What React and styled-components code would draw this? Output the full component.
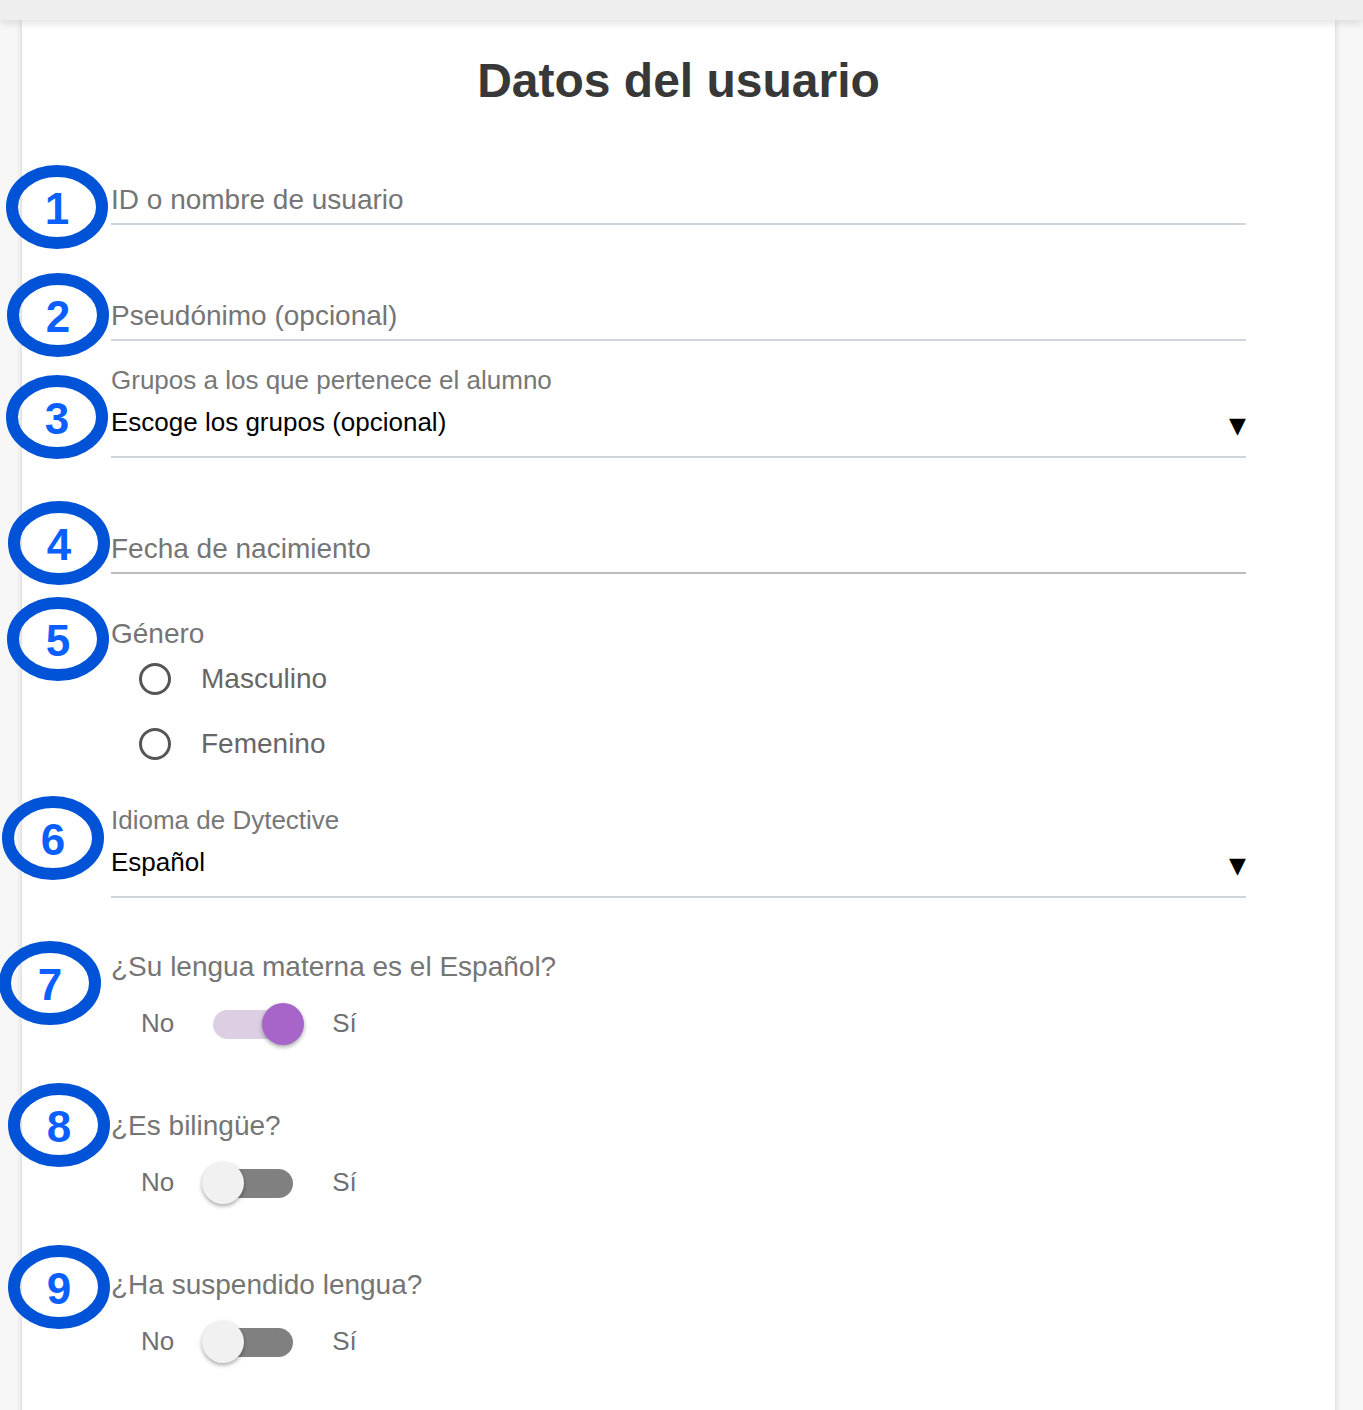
import React from 'react';
import styled, { createGlobalStyle } from 'styled-components';

const GlobalStyle = createGlobalStyle`
  html, body {
    margin: 0;
    padding: 0;
    background: #f7f7f7;
    font-family: "Liberation Sans", Arial, Helvetica, sans-serif;
  }
`;

const fields = [
  { n: 1, kind: 'text', text: 'ID o nombre de usuario', top: 74, mx: -105, my: -18 },
  { n: 2, kind: 'text', text: 'Pseudónimo (opcional)', top: 74, mx: -104, my: -26 },
  {
    n: 3,
    kind: 'select',
    label: 'Grupos a los que pertenece el alumno',
    value: 'Escoge los grupos (opcional)',
    top: 23,
    mx: -105,
    my: 11,
  },
  { n: 4, kind: 'text', text: 'Fecha de nacimiento', top: 74, mx: -103, my: -31, grey: true },
  { n: 5, kind: 'radio', label: 'Género', options: ['Masculino', 'Femenino'], top: 43, mx: -104, my: -20 },
  { n: 6, kind: 'select', label: 'Idioma de Dytective', value: 'Español', top: 43, mx: -109, my: -8 },
  { n: 7, kind: 'switch', label: '¿Su lengua materna es el Español?', on: true, top: 52, mx: -112, my: -9 },
  { n: 8, kind: 'switch', label: '¿Es bilingüe?', on: false, top: 64, mx: -103, my: -26 },
  { n: 9, kind: 'switch', label: '¿Ha suspendido lengua?', on: false, top: 64, mx: -103, my: -23 },
];

const Marker = ({ n, x, y }) => (
  <MarkerWrap $x={x} $y={y}>
    <svg width="102" height="84" viewBox="0 0 102 84">
      <ellipse cx="51" cy="42" rx="45" ry="36" fill="none" stroke="#0052d6" strokeWidth="12" />
    </svg>
    <Digit>{n}</Digit>
  </MarkerWrap>
);

const Chevron = () => <Arrow>▼</Arrow>;

const Switch = ({ on }) => (
  <SwitchRow>
    <SwitchText>No</SwitchText>
    <Track $on={on}>
      <Thumb $on={on} />
    </Track>
    <SwitchText>Sí</SwitchText>
  </SwitchRow>
);

const renderField = (f) => {
  switch (f.kind) {
    case 'text':
      return (
        <TextInput $grey={f.grey}>
          <Placeholder>{f.text}</Placeholder>
        </TextInput>
      );
    case 'select':
      return (
        <SelectBox>
          <SmallLabel>{f.label}</SmallLabel>
          <SelectValue>
            <span>{f.value}</span>
            <Chevron />
          </SelectValue>
        </SelectBox>
      );
    case 'radio':
      return (
        <div>
          <Placeholder>{f.label}</Placeholder>
          <RadioList>
            {f.options.map((o) => (
              <RadioRow key={o}>
                <RadioCircle />
                <RadioText>{o}</RadioText>
              </RadioRow>
            ))}
          </RadioList>
        </div>
      );
    case 'switch':
      return (
        <div>
          <Placeholder>{f.label}</Placeholder>
          <Switch on={f.on} />
        </div>
      );
    default:
      return null;
  }
};

const App = () => {
  return (
    <>
      <GlobalStyle />
      <TopBar />
      <Page>
        <Card>
          <Title>Datos del usuario</Title>
          <Form>
            {fields.map((f) => (
              <Field key={f.n} $top={f.top}>
                <Marker n={f.n} x={f.mx} y={f.my} />
                {renderField(f)}
              </Field>
            ))}
          </Form>
        </Card>
      </Page>
    </>
  );
};

const TopBar = styled.div`
  position: relative;
  z-index: 2;
  height: 20px;
  background: #eeeeee;
  box-shadow: 0 3px 8px rgba(0, 0, 0, 0.12);
`;

const Page = styled.div`
  display: flex;
  padding: 0 28px 0 22px;
  min-height: 1390px;
`;

const Card = styled.div`
  flex: 1;
  background: #ffffff;
  box-shadow: 0 0 6px rgba(0, 0, 0, 0.18);
  padding: 33px 89px 80px;
`;

const Title = styled.h1`
  margin: 0;
  font-size: 48px;
  line-height: 56px;
  font-weight: 700;
  color: #383838;
  text-align: center;
`;

const Form = styled.div`
  display: flex;
  flex-direction: column;
`;

const Field = styled.div`
  position: relative;
  margin-top: ${(p) => p.$top}px;
`;

const MarkerWrap = styled.div`
  position: absolute;
  left: ${(p) => p.$x}px;
  top: ${(p) => p.$y}px;
  width: 102px;
  height: 84px;
  display: flex;
  align-items: center;
  justify-content: center;
  pointer-events: none;

  svg {
    position: absolute;
    inset: 0;
  }
`;

const Digit = styled.span`
  position: relative;
  font-size: 44px;
  font-weight: 700;
  line-height: 1;
  color: #0b5fff;
  margin-top: 4px;
`;

const TextInput = styled.div`
  padding-bottom: 6px;
  border-bottom: 2px solid ${(p) => (p.$grey ? '#bdbdbd' : '#d0d4db')};
`;

const Placeholder = styled.div`
  font-size: 28px;
  line-height: 34px;
  color: #757575;
`;

const SelectBox = styled.div`
  padding-bottom: 18px;
  border-bottom: 2px solid #d0d4db;
`;

const SmallLabel = styled.div`
  font-size: 26px;
  line-height: 32px;
  color: #777777;
`;

const SelectValue = styled.div`
  margin-top: 10px;
  display: flex;
  align-items: center;
  justify-content: space-between;
  font-size: 26px;
  line-height: 32px;
  color: #000000;
`;

const Arrow = styled.span`
  font-family: "DejaVu Sans", sans-serif;
  font-size: 22px;
  line-height: 1;
  margin-top: 8px;
  margin-right: 0;
  color: #000;
`;

const RadioList = styled.div`
  display: flex;
  flex-direction: column;
  gap: 31px;
  margin-top: 11px;
  padding-left: 28px;
`;

const RadioRow = styled.div`
  display: flex;
  align-items: center;
  gap: 30px;
  height: 34px;
`;

const RadioCircle = styled.span`
  box-sizing: border-box;
  width: 32px;
  height: 32px;
  border-radius: 50%;
  border: 3px solid #555555;
`;

const RadioText = styled.span`
  font-size: 28px;
  line-height: 34px;
  color: #666666;
`;

const SwitchRow = styled.div`
  display: flex;
  align-items: center;
  gap: 39px;
  height: 42px;
  margin-top: 19px;
  padding-left: 30px;
`;

const SwitchText = styled.span`
  font-size: 26px;
  line-height: 32px;
  color: #707070;
  margin-top: -3px;
`;

const Track = styled.span`
  position: relative;
  width: 80px;
  height: 29px;
  border-radius: 15px;
  background: ${(p) => (p.$on ? '#dccfe3' : '#808080')};
`;

const Thumb = styled.span`
  position: absolute;
  top: 50%;
  left: ${(p) => (p.$on ? '49px' : '-11px')};
  width: 42px;
  height: 42px;
  margin-top: -21px;
  border-radius: 50%;
  background: ${(p) => (p.$on ? '#a865c9' : '#f1f1f1')};
  box-shadow: 0 2px 4px rgba(0, 0, 0, 0.35);
`;

export default App;
